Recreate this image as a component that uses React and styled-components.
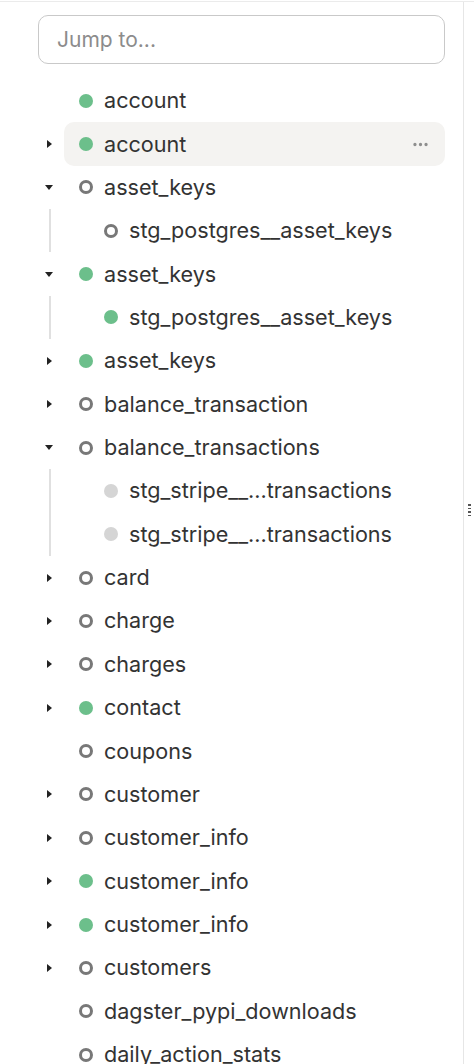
import styled, { createGlobalStyle, css } from "styled-components";
import { Ellipsis } from "lucide-react";

const GlobalStyle = createGlobalStyle`
    body {
        margin: 0;
        background: #ffffff;
        font-family: Inter, "Noto Sans", sans-serif;
        color: #333333;
    }
`

const rows = [
    { depth: 0, name: "account", status: "green" },
    { depth: 0, name: "account", status: "green", arrow: "right", active: true },
    { depth: 0, name: "asset_keys", status: "ring", arrow: "down" },
    { depth: 1, name: "stg_postgres__asset_keys", status: "ring" },
    { depth: 0, name: "asset_keys", status: "green", arrow: "down" },
    { depth: 1, name: "stg_postgres__asset_keys", status: "green" },
    { depth: 0, name: "asset_keys", status: "green", arrow: "right" },
    { depth: 0, name: "balance_transaction", status: "ring", arrow: "right" },
    { depth: 0, name: "balance_transactions", status: "ring", arrow: "down" },
    { depth: 1, name: "stg_stripe__...transactions", status: "gray" },
    { depth: 1, name: "stg_stripe__...transactions", status: "gray" },
    { depth: 0, name: "card", status: "ring", arrow: "right" },
    { depth: 0, name: "charge", status: "ring", arrow: "right" },
    { depth: 0, name: "charges", status: "ring", arrow: "right" },
    { depth: 0, name: "contact", status: "green", arrow: "right" },
    { depth: 0, name: "coupons", status: "ring" },
    { depth: 0, name: "customer", status: "ring", arrow: "right" },
    { depth: 0, name: "customer_info", status: "ring", arrow: "right" },
    { depth: 0, name: "customer_info", status: "green", arrow: "right" },
    { depth: 0, name: "customer_info", status: "green", arrow: "right" },
    { depth: 0, name: "customers", status: "ring", arrow: "right" },
    { depth: 0, name: "dagster_pypi_downloads", status: "ring" },
    { depth: 0, name: "daily_action_stats", status: "ring" },
]

export default function App() {
    return (
        <>
            <GlobalStyle />
            <Page>
                <Sidebar>
                    <SearchBox placeholder="Jump to..." />
                    <Tree>
                        {rows.map((row, i) => (
                            <Row key={i}>
                                <ArrowCell guide={row.depth > 0}>
                                    {row.arrow && <Caret dir={row.arrow} />}
                                </ArrowCell>
                                <Item active={row.active} depth={row.depth}>
                                    <Dot status={row.status} />
                                    <Label>{row.name}</Label>
                                    {row.active && (
                                        <More>
                                            <Ellipsis size={19} strokeWidth={2.2} />
                                        </More>
                                    )}
                                </Item>
                            </Row>
                        ))}
                    </Tree>
                </Sidebar>
                <Gutter>
                    <Grip>
                        <span /><span /><span /><span />
                    </Grip>
                </Gutter>
            </Page>
        </>
    )
}

const Page = styled.div`
    display: flex;
    height: 1064px;
    overflow: hidden;
    box-sizing: border-box;
    padding-top: 1px;

    &::before {
        content: "";
        position: absolute;
        top: 1px;
        left: 0;
        right: 0;
        height: 1px;
        background: #ebebeb;
    }
`

const Sidebar = styled.div`
    width: 464px;
    flex-shrink: 0;
    border-right: 1px solid #e6e6e6;
    box-sizing: border-box;
    padding: 14px 18px 0 36px;
    display: flex;
    flex-direction: column;
`

const SearchBox = styled.input`
    flex-shrink: 0;
    margin-left: 2px;
    height: 49px;
    box-sizing: border-box;
    border: 1px solid #c9c9c9;
    border-radius: 10px;
    padding: 0 18px;
    font-family: Inter, "Noto Sans", sans-serif;
    font-size: 21px;
    color: #333;
    outline: none;

    &::placeholder {
        color: #8c8c8c;
    }
`

const Tree = styled.div`
    flex-shrink: 0;
    margin-top: 15px;
    display: flex;
    flex-direction: column;
`

const Row = styled.div`
    display: flex;
    align-items: stretch;
    height: 43.36px;
    flex-shrink: 0;
`

const ArrowCell = styled.div`
    width: 28px;
    flex-shrink: 0;
    display: flex;
    align-items: center;
    justify-content: center;
    position: relative;
    padding-right: 2px;
    box-sizing: border-box;

    ${p => p.guide && css`
        &::before {
            content: "";
            position: absolute;
            top: 0;
            bottom: 0;
            left: 13px;
            width: 1.5px;
            background: #e0e0e0;
        }
    `}
`

const Caret = styled.span`
    width: 0;
    height: 0;
    ${p => p.dir === "right" ? css`
        border-top: 4px solid transparent;
        border-bottom: 4px solid transparent;
        border-left: 5px solid #222;
        margin-left: 1px;
    ` : css`
        border-left: 4.5px solid transparent;
        border-right: 4.5px solid transparent;
        border-top: 5px solid #222;
    `}
`

const Item = styled.div`
    flex: 1;
    display: flex;
    align-items: center;
    gap: 11px;
    padding-left: ${p => 15 + p.depth * 25}px;
    padding-right: 15px;
    border-radius: 10px;
    background: ${p => p.active ? "#f4f3f1" : "transparent"};
`

const Dot = styled.span`
    width: 14px;
    height: 14px;
    border-radius: 50%;
    flex-shrink: 0;
    box-sizing: border-box;
    ${p => p.status === "green" && css`background: #6cbf8b;`}
    ${p => p.status === "gray" && css`background: #d5d5d5;`}
    ${p => p.status === "ring" && css`
        border: 3px solid #787878;
    `}
`

const Label = styled.span`
    font-size: 21.6px;
    color: #333;
    white-space: nowrap;
    flex: 1;
    padding-bottom: 1px;
`

const More = styled.span`
    display: flex;
    align-items: center;
    color: #8e8e8e;
`

const Gutter = styled.div`
    flex: 1;
    position: relative;
`

const Grip = styled.div`
    position: absolute;
    top: 503px;
    left: 4px;
    display: flex;
    flex-direction: column;
    gap: 2px;

    span {
        display: block;
        width: 3px;
        height: 1.5px;
        background: #555;
    }
`
